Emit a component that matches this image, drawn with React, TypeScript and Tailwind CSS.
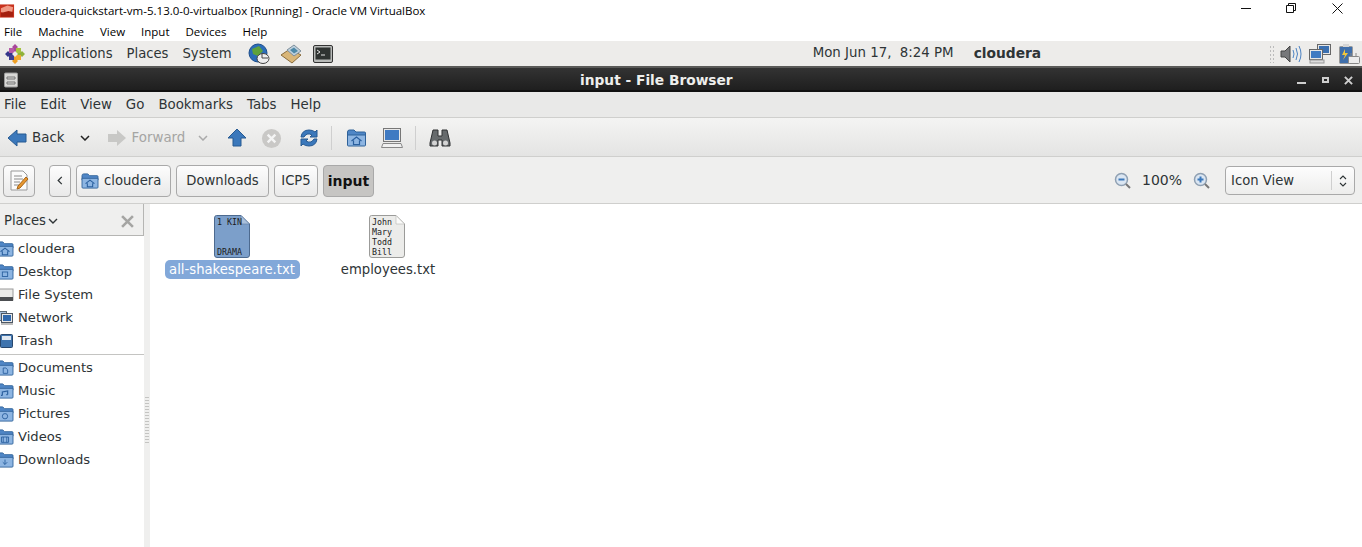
import type { FC, ReactNode } from 'react';

const Folder: FC<{ className?: string; children?: ReactNode }> = ({ className, children }) => (
  <svg viewBox="0 0 20 18" className={className}>
    <path d="M1 3 Q1 1 3 1 H7.5 L9.5 3 H18 Q19 3 19 4 V8 H1 Z" fill="#4f86c6" stroke="#2f6299" strokeWidth="1" />
    <path d="M1 6 H19 V16 Q19 17 18 17 H2 Q1 17 1 16 Z" fill="#8db5e2" stroke="#2f6299" strokeWidth="1" />
    {children}
  </svg>
);

const HomeGlyph = () => <path d="M5 12 L10 8 L15 12 M7 11.5 V15.5 H13 V11.5" fill="none" stroke="#2a5f9e" strokeWidth="1.2" />;

const PathBtn: FC<{ className?: string; children: ReactNode }> = ({ className, children }) => (
  <div className={`flex h-[32px] items-center rounded-[4px] border border-[#a9a9a9] bg-gradient-to-b from-[#fdfdfd] to-[#e9e9e9] ${className ?? ''}`}>
    {children}
  </div>
);

const Centos = () => (
  <svg viewBox="0 0 20 20" className="h-[20px] w-[20px]">
    <path d="M10 0 L13 3 L11 5 V9 H9 V5 L7 3 Z" fill="#a8479a" />
    <path d="M11 4 H16 V9 H11 Z" fill="#a4c23e" />
    <path d="M20 10 L17 13 L15 11 H11 V9 H15 L17 7 Z" fill="#8fb23a" />
    <path d="M11 11 H16 V16 H11 Z" fill="#f0a92e" />
    <path d="M10 20 L7 17 L9 15 V11 H11 V15 L13 17 Z" fill="#ee9f24" />
    <path d="M4 11 H9 V16 H4 Z" fill="#3d3f93" />
    <path d="M0 10 L3 7 L5 9 H9 V11 H5 L3 13 Z" fill="#34368a" />
    <path d="M4 4 H9 V9 H4 Z" fill="#b65aa8" />
    <path d="M10 7 L13 10 L10 13 L7 10 Z" fill="#efecea" />
  </svg>
);

const sidebarA: [string, ReactNode][] = [
  ['cloudera', <Folder className="h-[16px] w-[18px] shrink-0"><HomeGlyph /></Folder>],
  ['Desktop', <Folder className="h-[16px] w-[18px] shrink-0"><rect x="7" y="9" width="6" height="5" fill="none" stroke="#2a5f9e" /></Folder>],
  ['File System', (
    <svg viewBox="0 0 18 16" className="h-[16px] w-[18px] shrink-0">
      <rect x="0" y="2" width="17" height="11" fill="#ebebe9" stroke="#9a9a9a" />
      <rect x="0" y="10" width="17" height="4" fill="#4c4e51" />
    </svg>
  )],
  ['Network', (
    <svg viewBox="0 0 18 16" className="h-[16px] w-[18px] shrink-0">
      <rect x="0.5" y="1.5" width="10" height="9" fill="#a6bfdc" stroke="#5d6b7a" />
      <rect x="5.5" y="3.5" width="11" height="9" fill="#e8e8e8" stroke="#4d5763" />
      <rect x="7" y="5" width="8" height="6" fill="#2f68ad" />
      <rect x="5" y="13" width="12" height="2" fill="#bdbdbd" />
    </svg>
  )],
  ['Trash', (
    <svg viewBox="0 0 18 16" className="h-[16px] w-[18px] shrink-0">
      <rect x="4.5" y="1.5" width="12" height="13" rx="1" fill="#3f74ae" stroke="#27476d" />
      <rect x="6" y="3" width="9" height="4" fill="#dfe7f0" />
    </svg>
  )],
];

const sidebarB: [string, ReactNode][] = [
  ['Documents', <path d="M8 9 H11 L13 11 V15 H8 Z" fill="none" stroke="#2a5f9e" />],
  ['Music', <path d="M7 14 V10 L13 9 V13 M5.5 14 H7 M11.5 13 H13" fill="none" stroke="#2a5f9e" strokeWidth="1.3" />],
  ['Pictures', <circle cx="10" cy="11.5" r="3" fill="none" stroke="#2a5f9e" />],
  ['Videos', <path d="M6 9 H14 V15 H6 Z M8 9 V15 M12 9 V15" fill="none" stroke="#2a5f9e" />],
  ['Downloads', <path d="M10 8.5 V14 M7.5 11.5 L10 14 L12.5 11.5" fill="none" stroke="#2a5f9e" />],
];

const SideRow: FC<{ label: string; icon: ReactNode }> = ({ label, icon }) => (
  <div className="flex h-[23px] items-center">
    <div className="-ml-[4px] mr-[4px] flex">{icon}</div>
    <span>{label}</span>
  </div>
);

const FileIcon: FC<{ blue?: boolean; lines: [number, string][] }> = ({ blue, lines }) => (
  <svg viewBox="0 0 36 43" className="h-[43px] w-[36px]">
    <path
      d="M2.5 0.5 H27 L35.5 9 V40 Q35.5 42.5 33 42.5 H3 Q0.5 42.5 0.5 40 V3 Q0.5 0.5 2.5 0.5 Z"
      fill={blue ? '#7c9fca' : '#ececea'}
      stroke={blue ? '#4d6a8f' : '#9b9b99'}
    />
    <path d="M27 0.5 V9 H35.5 Z" fill={blue ? '#a9bfdb' : '#fbfbfa'} stroke={blue ? '#5f7ca1' : '#b5b5b3'} strokeWidth="0.6" />
    {lines.map(([y, t]) => (
      <text key={t} x="3" y={y} fontSize="8.3" fill="#1c1c1c" fontFamily="'DejaVu Sans Mono', monospace">
        {t}
      </text>
    ))}
  </svg>
);

const App: FC = () => {
  return (
    <div className="flex h-[547px] w-[1362px] flex-col overflow-hidden bg-white text-[13.2px] text-[#2e3436] [font-family:'DejaVu_Sans',sans-serif]">
      {/* host window */}
      <div className="flex h-[22px] items-center bg-white text-black [font-family:'Open_Sans',sans-serif]">
        <svg viewBox="0 0 16 16" className="h-[16px] w-[15px]">
          <rect x="0" y="1" width="15" height="14" fill="#c8321e" />
          <path d="M1 5 L8 2 L14 4 L13 9 L6 11 L1 9 Z" fill="#f09a85" />
          <path d="M1 10 L9 8 L14 9 V14 H1 Z" fill="#a5200f" />
        </svg>
        <span className="ml-[4px] text-[11.52px] leading-none">cloudera-quickstart-vm-5.13.0-0-virtualbox [Running] - Oracle VM VirtualBox</span>
        <div className="mb-[6px] ml-auto flex items-center">
          <svg viewBox="0 0 10 10" className="mr-[35px] h-[10px] w-[10px]"><path d="M0 5.5 H10" stroke="#111" /></svg>
          <svg viewBox="0 0 10 10" className="mr-[36px] h-[10px] w-[10px]"><path d="M0.5 2.5 H7.5 V9.5 H0.5 Z M2.5 2.5 V0.5 H9.5 V7.5 H7.5" fill="none" stroke="#111" /></svg>
          <svg viewBox="0 0 11 11" className="mr-[19px] h-[11px] w-[11px]"><path d="M0.5 0.5 L10.5 10.5 M10.5 0.5 L0.5 10.5" stroke="#111" /></svg>
        </div>
      </div>
      <div className="flex h-[19px] items-center gap-[16px] bg-white pl-[4px] text-[11.5px] text-black [font-family:'Open_Sans',sans-serif]">
        <span>File</span>
        <span>Machine</span>
        <span>View</span>
        <span>Input</span>
        <span>Devices</span>
        <span>Help</span>
      </div>

      {/* gnome panel */}
      <div className="flex h-[25px] items-center bg-[#edecea] pl-[5px]">
        <Centos />
        <span className="ml-[7px]">Applications</span>
        <span className="ml-[14px]">Places</span>
        <span className="ml-[14px]">System</span>
        <svg viewBox="0 0 22 22" className="ml-[16px] h-[22px] w-[22px]">
          <circle cx="10" cy="10" r="9" fill="#2b6cb8" stroke="#1f4f8c" />
          <path d="M4 6 L11 3 L15 8 L10 13 L5 11 Z" fill="#5ea23c" />
          <ellipse cx="15" cy="15.5" rx="6" ry="5" fill="#eeeeef" stroke="#444" />
          <path d="M14 11 V15 H20" fill="none" stroke="#444" />
        </svg>
        <svg viewBox="0 0 22 22" className="ml-[10px] h-[22px] w-[22px]">
          <path d="M1 12 L10 6 L21 12 L12 20 Z" fill="#d9b678" stroke="#8a6c3c" />
          <path d="M7 7 L14 2 L21 8 L14 13 Z" fill="#bfd0dc" stroke="#7d8f9c" />
          <path d="M10 7 L14 4.5 L18 8 L14 10.5 Z" fill="#4d89a8" />
        </svg>
        <svg viewBox="0 0 20 20" className="ml-[11px] h-[20px] w-[20px]">
          <rect x="0.5" y="1.5" width="19" height="17" rx="1.5" fill="#b8bab8" stroke="#333" />
          <rect x="2.5" y="3.5" width="15" height="12" fill="#2f3331" />
          <path d="M4 6 L7 8 L4 10 M8 11 H12" stroke="#e4e4e4" fill="none" />
        </svg>
        <div className="ml-[480px] flex w-[240px]">
          <span className="whitespace-pre text-[13.35px]">Mon Jun 17,  8:24 PM</span>
          <span className="ml-[20px] text-[13.8px] font-bold">cloudera</span>
        </div>
        <div className="ml-auto flex items-center">
          <div className="mr-[6px] h-[18px] w-[5px] bg-[radial-gradient(#bbb_1px,transparent_1px)] bg-[length:3px_4px]" />
          <svg viewBox="0 0 22 20" className="mr-[7px] h-[20px] w-[22px]">
            <path d="M1 7 H5 L10 2 V18 L5 13 H1 Z" fill="#77787a" stroke="#444" />
            <path d="M13 6 Q15 10 13 14 M16 4 Q19 10 16 16 M19 2 Q23 10 19 18" fill="none" stroke="#4c83c3" />
          </svg>
          <svg viewBox="0 0 22 20" className="mr-[7px] h-[20px] w-[22px]">
            <rect x="8.5" y="0.5" width="13" height="10" fill="#e6e6e6" stroke="#666" />
            <rect x="10" y="2" width="10" height="7" fill="#3a6fb0" />
            <rect x="0.5" y="5.5" width="13" height="10" fill="#e6e6e6" stroke="#666" />
            <rect x="2" y="7" width="10" height="7" fill="#3f7ac2" />
            <rect x="1" y="16" width="14" height="3" fill="#ddd" stroke="#999" />
          </svg>
          <svg viewBox="0 0 23 22" className="mr-[1px] h-[22px] w-[23px]">
            <rect x="1.5" y="3.5" width="13" height="17" rx="1" fill="#3f6fab" stroke="#999" />
            <rect x="5" y="1" width="6" height="3" fill="#d5d5d5" />
            <path d="M7 6 L4 12 H7 L5 17 L10 10 H7 Z" fill="#f3c73a" />
            <rect x="10.5" y="13.5" width="11" height="7" rx="1" fill="#ececec" stroke="#888" />
            <path d="M13 13 V10 M18 13 V10" stroke="#888" />
          </svg>
        </div>
      </div>

      {/* window titlebar */}
      <div className="flex h-[26px] items-center border-t-2 border-[#5a5a58] bg-gradient-to-b from-[#333333] to-[#1d1d1d] shadow-[inset_0_-2px_0_#111]">
        <svg viewBox="0 0 14 16" className="ml-[4px] h-[16px] w-[14px]">
          <rect x="0.5" y="1" width="13" height="14" rx="1" fill="#d8d8d6" stroke="#999" />
          <path d="M3 5 H11 V7 H3 Z M3 10 H11 V12 H3 Z" fill="none" stroke="#777" />
        </svg>
        <span className="ml-[562px] text-[13.75px] font-bold text-[#eeeeec]">input - File Browser</span>
        <div className="ml-auto flex items-center">
          <div className="mr-[16px] mt-[5px] h-[2px] w-[9px] bg-[#cfcfcf]" />
          <div className="mr-[15px] h-[6px] w-[7px] border-2 border-[#cfcfcf]" />
          <svg viewBox="0 0 10 10" className="mr-[9px] h-[9px] w-[9px]"><path d="M1 1 L9 9 M9 1 L1 9" stroke="#cfcfcf" strokeWidth="2.2" /></svg>
        </div>
      </div>

      {/* app menu */}
      <div className="flex h-[26px] items-center gap-[14px] border-b border-[#cfcfcd] bg-[#e9e9e8] pl-[4px] pt-[2px] text-[13.35px]">
        <span>File</span>
        <span>Edit</span>
        <span>View</span>
        <span>Go</span>
        <span>Bookmarks</span>
        <span>Tabs</span>
        <span>Help</span>
      </div>

      {/* toolbar */}
      <div className="flex h-[39px] items-center border-b border-[#cfcfcd] bg-gradient-to-b from-[#f4f4f3] to-[#e4e4e3] pl-[7px] pt-[2px] text-[13.4px]">
        <svg viewBox="0 0 20 20" className="h-[20px] w-[20px]"><path d="M1 10 L10 2 V6 H19 V14 H10 V18 Z" fill="#3b78bb" stroke="#275a92" /></svg>
        <span className="ml-[5px]">Back</span>
        <svg viewBox="0 0 10 6" className="ml-[15px] h-[6px] w-[10px]"><path d="M1 1 L5 5 L9 1" fill="none" stroke="#222" strokeWidth="1.5" /></svg>
        <svg viewBox="0 0 20 20" className="ml-[17px] h-[20px] w-[20px]"><path d="M19 10 L10 2 V6 H1 V14 H10 V18 Z" fill="#c8c8c6" /></svg>
        <span className="ml-[5px] text-[#a5a5a3]">Forward</span>
        <svg viewBox="0 0 10 6" className="ml-[13px] h-[6px] w-[10px]"><path d="M1 1 L5 5 L9 1" fill="none" stroke="#aaa" strokeWidth="1.5" /></svg>
        <svg viewBox="0 0 20 20" className="ml-[19px] h-[20px] w-[20px]"><path d="M10 1 L19 10 H14 V18 H6 V10 H1 Z" fill="#3b78bb" stroke="#275a92" /></svg>
        <svg viewBox="0 0 22 22" className="ml-[14px] h-[21px] w-[21px]">
          <circle cx="11" cy="11" r="10" fill="#c9c8c6" />
          <path d="M7 7 L15 15 M15 7 L7 15" stroke="#f4f4f4" strokeWidth="2.5" />
        </svg>
        <svg viewBox="0 0 20 20" className="ml-[17px] h-[20px] w-[20px]">
          <path d="M2 9 Q3 2 10 2 Q14 2 16 4 L18 2 V9 H11 L13 7 Q8 4 5 9 Z" fill="#3b78bb" stroke="#275a92" />
          <path d="M18 11 Q17 18 10 18 Q6 18 4 16 L2 18 V11 H9 L7 13 Q12 16 15 11 Z" fill="#3b78bb" stroke="#275a92" />
        </svg>
        <div className="ml-[12px] mr-[14px] h-[24px] w-px bg-[#cfcfcf]" />
        <Folder className="h-[18px] w-[21px]"><HomeGlyph /></Folder>
        <svg viewBox="0 0 22 22" className="ml-[14px] h-[22px] w-[22px]">
          <rect x="2.5" y="1.5" width="17" height="13" fill="#e8e8e8" stroke="#777" />
          <rect x="4" y="3" width="14" height="10" fill="#3f7ac2" />
          <path d="M0.5 20.5 L2 16.5 H20 L21.5 20.5 Z" fill="#f0f0f0" stroke="#888" />
        </svg>
        <div className="ml-[12px] mr-[13px] h-[24px] w-px bg-[#cfcfcf]" />
        <svg viewBox="0 0 22 20" className="h-[20px] w-[22px]">
          <path d="M4 2 H9 V8 H13 V2 H18 L21 15 V18 H13 V12 H9 V18 H1 V15 Z" fill="#666a6c" stroke="#2e3032" />
          <circle cx="5.5" cy="15" r="2.5" fill="#d4d4d4" />
          <circle cx="16.5" cy="15" r="2.5" fill="#d4d4d4" />
        </svg>
      </div>

      {/* path bar */}
      <div className="flex h-[47px] items-center border-b border-[#cfcfcd] bg-[#efefee] pl-[3px] pr-[7px] pt-[1px]">
        <PathBtn className="w-[32px] justify-center">
          <svg viewBox="0 0 20 22" className="h-[22px] w-[20px]">
            <path d="M2 1 H14 L18 5 V20 H2 Z" fill="#fbfbfb" stroke="#999" />
            <path d="M5 6 H13 M5 9 H14 M5 12 H11 M5 15 H10" stroke="#8a8a8a" />
            <path d="M9 16 L17 7 L19 9 L11 18 L8 19 Z" fill="#e8962e" stroke="#a5661a" />
          </svg>
        </PathBtn>
        <PathBtn className="ml-[14px] w-[22px] justify-center">
          <svg viewBox="0 0 6 10" className="h-[9px] w-[6px]"><path d="M5 1 L1 5 L5 9" fill="none" stroke="#2e3436" strokeWidth="1.4" /></svg>
        </PathBtn>
        <PathBtn className="ml-[5px] w-[95px] gap-[5px] pl-[4px]">
          <Folder className="h-[16px] w-[18px]"><HomeGlyph /></Folder>
          <span>cloudera</span>
        </PathBtn>
        <PathBtn className="ml-[5px] w-[93px] justify-center">Downloads</PathBtn>
        <PathBtn className="ml-[5px] w-[44px] justify-center">ICP5</PathBtn>
        <div className="ml-[5px] flex h-[32px] w-[51px] items-center justify-center rounded-[4px] border border-[#a9a9a9] bg-[#c6c5c3] pt-[1px] text-[14px] font-bold text-[#111]">input</div>
        <svg viewBox="0 0 18 18" className="ml-auto h-[18px] w-[18px]">
          <circle cx="7.5" cy="7.5" r="6" fill="#dbe6f2" stroke="#8fa0b2" strokeWidth="1.5" />
          <path d="M4.5 7.5 H10.5" stroke="#3b78bb" strokeWidth="2" />
          <path d="M12 12 L16 16" stroke="#777" strokeWidth="2" />
        </svg>
        <span className="ml-[10px] text-[14px]">100%</span>
        <svg viewBox="0 0 18 18" className="ml-[11px] h-[18px] w-[18px]">
          <circle cx="7.5" cy="7.5" r="6" fill="#dbe6f2" stroke="#8fa0b2" strokeWidth="1.5" />
          <path d="M4.5 7.5 H10.5 M7.5 4.5 V10.5" stroke="#3b78bb" strokeWidth="2" />
          <path d="M12 12 L16 16" stroke="#777" strokeWidth="2" />
        </svg>
        <div className="ml-[14px] flex h-[29px] w-[130px] items-center rounded-[4px] border border-[#a9a9a9] bg-gradient-to-b from-[#fdfdfd] to-[#ededec] pl-[5px]">
          <span>Icon View</span>
          <div className="ml-auto h-[19px] w-px bg-[#cfcfcf]" />
          <svg viewBox="0 0 8 12" className="mx-[7px] h-[12px] w-[8px]"><path d="M1 4 L4 1 L7 4 M1 8 L4 11 L7 8" fill="none" stroke="#2e3436" strokeWidth="1.1" /></svg>
        </div>
      </div>

      {/* body */}
      <div className="flex min-h-0 flex-1">
        <aside className="flex w-[144px] flex-col">
          <div className="flex h-[32px] items-center border-b border-r border-[#b5b5b3] bg-[#efefee] pl-[4px] pt-[3px]">
            <span>Places</span>
            <svg viewBox="0 0 10 6" className="ml-[2px] h-[6px] w-[10px]"><path d="M1 1 L5 5 L9 1" fill="none" stroke="#2e3436" strokeWidth="1.4" /></svg>
            <svg viewBox="0 0 12 12" className="ml-auto mr-[9px] h-[13px] w-[13px]"><path d="M1 1 L11 11 M11 1 L1 11" stroke="#a5a5a3" strokeWidth="2.4" /></svg>
          </div>
          <div className="flex flex-col pt-[1px] text-[13.15px]">
            {sidebarA.map(([label, icon]) => (
              <SideRow key={label} label={label} icon={icon} />
            ))}
            <div className="mb-[1px] mt-[2px] h-px bg-[#c4c4c2]" />
            {sidebarB.map(([label, glyph]) => (
              <SideRow key={label} label={label} icon={<Folder className="h-[16px] w-[18px] shrink-0">{glyph}</Folder>} />
            ))}
          </div>
        </aside>
        <div className="flex w-[6px] items-center justify-center bg-[#efefee]">
          <div className="mt-[88px] h-[48px] w-[4px] bg-[radial-gradient(#c4c4c2_0.7px,transparent_0.8px)] bg-[length:2px_3px]" />
        </div>
        <main className="flex flex-1 items-start bg-white pl-[14px] pt-[11px]">
          <div className="flex w-[136px] flex-col items-center">
            <FileIcon blue lines={[[10, '1 KIN'], [40, 'DRAMA']]} />
            <span className="mt-[2px] flex h-[19px] w-[135px] items-center justify-center whitespace-nowrap rounded-[5px] bg-[#82a8d9] text-white">all-shakespeare.txt</span>
          </div>
          <div className="ml-[20px] flex w-[134px] flex-col items-center">
            <FileIcon lines={[[10, 'John'], [20, 'Mary'], [30, 'Todd'], [40, 'Bill']]} />
            <span className="ml-[2px] mt-[2px] flex h-[19px] items-center text-[#2e3436]">employees.txt</span>
          </div>
        </main>
      </div>
    </div>
  );
};

export default App;
